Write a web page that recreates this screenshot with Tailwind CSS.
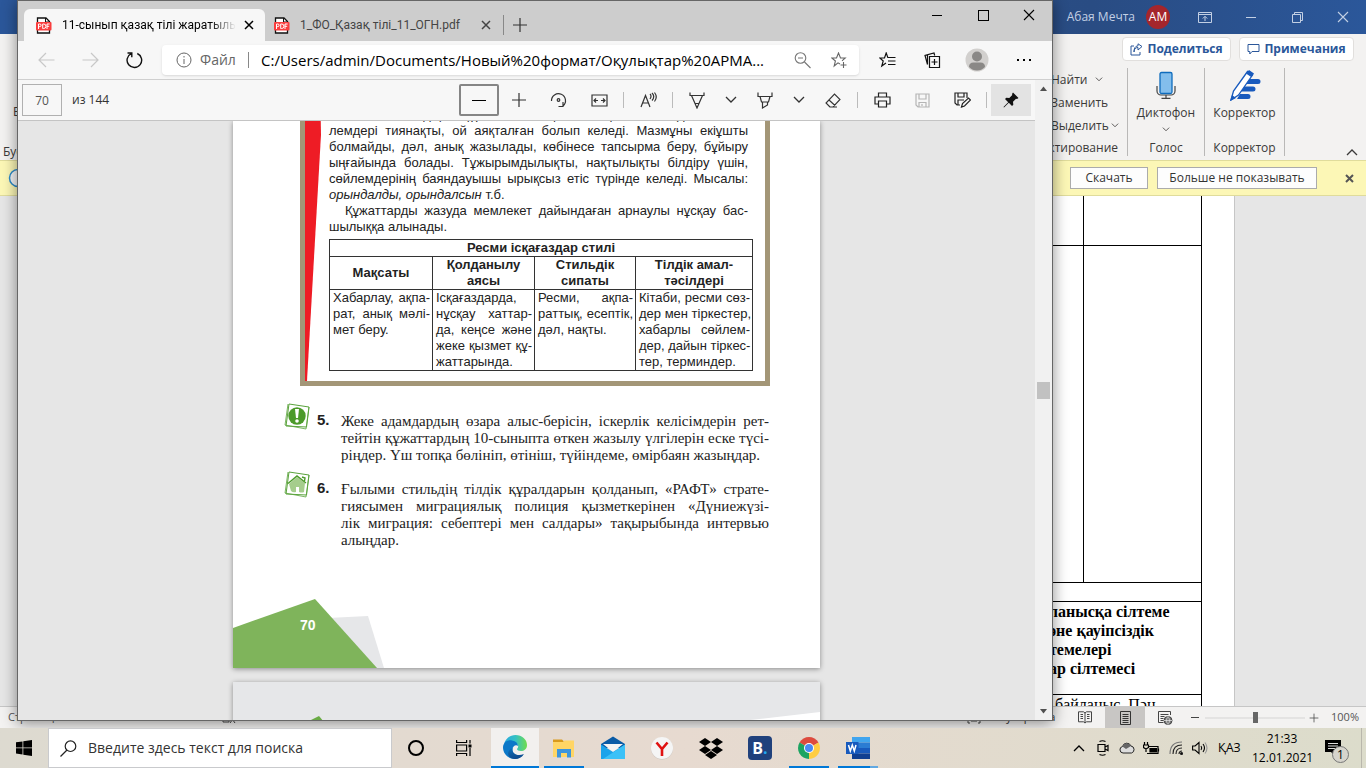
<!DOCTYPE html>
<html lang="kk">
<head>
<meta charset="utf-8">
<meta name="viewport" content="width=device-width, initial-scale=1">
<title>11-сынып қазақ тілі</title>
<script src="https://cdn.jsdelivr.net/npm/@tailwindcss/browser@4"></script>
</head>
<body class="h-screen overflow-hidden font-['Open_Sans','Noto_Sans',sans-serif] text-[#333]">
<svg class="hidden">
  <symbol id="pdf" viewBox="0 0 16 17"><path d="M1.500 5V1H10l3.500 3.500V16H1.500V13" fill="#fff" stroke="#111" stroke-width="1.300"/><path d="M9.500 1v4h4" fill="none" stroke="#111"/><rect x="0" y="5" width="15.500" height="8.500" rx="1" fill="#f93e3e"/><path d="M2.500 12V7h1.300a1.300 1.300 0 0 1 0 2.600H2.500M6.700 7v4.500h1a2 2 0 0 0 0-4.500zM11 12V7h2.600M11 9.300h2.200" fill="none" stroke="#fff" stroke-width="1"/></symbol>
  <symbol id="x" viewBox="0 0 10 10"><path d="M1 1l8 8M9 1l-8 8" stroke="currentColor" stroke-width="1.500"/></symbol>
  <symbol id="xthin" viewBox="0 0 12 12"><path d="M1 1l10 10M11 1L1 11" stroke="currentColor" stroke-width="1.100"/></symbol>
  <symbol id="plus" viewBox="0 0 16 16"><path d="M8 1v14M1 8h14" stroke="currentColor" stroke-width="1.200"/></symbol>
  <symbol id="chev" viewBox="0 0 12 8"><path d="M1 1l5 5 5-5" fill="none" stroke="currentColor" stroke-width="1.300"/></symbol>
</svg>
<div class="flex h-full flex-col">
 <div class="relative flex min-h-0 flex-1 flex-col overflow-hidden">

  <!-- Word window -->
  <header class="flex h-[34px] shrink-0 items-center justify-end bg-[#2b579a] bg-linear-to-r from-[#2b579a] via-[#294c83] via-80% to-[#2b579a] text-[#c3d0e4]">
    <span class="text-xs">Абая Мечта</span>
    <span class="ml-[11px] flex size-6 items-center justify-center rounded-full bg-[#a4262c] text-xs text-white">АМ</span>
    <div class="ml-3 flex h-full">
      <button aria-label="Лента" class="flex w-[46px] items-center justify-center"><svg width="14" height="11" viewBox="0 0 14 11" fill="none" stroke="currentColor"><path d="M.5.5h13v10H.5zM.5 2.500h13M7 9V4.500M4.800 6.500L7 4.300l2.200 2.200"/></svg></button>
      <button aria-label="Свернуть" class="flex w-[46px] items-center justify-center"><span class="h-px w-[10px] bg-current"></span></button>
      <button aria-label="Восстановить" class="flex w-[46px] items-center justify-center"><svg width="11" height="11" viewBox="0 0 11 11" fill="none" stroke="currentColor"><path d="M.5 2.500h8v8h-8zM2.500 2.500v-2h8v8h-2"/></svg></button>
      <button aria-label="Закрыть" class="flex w-[46px] items-center justify-center"><svg class="size-3"><use href="#xthin"/></svg></button>
    </div>
  </header>
  <div class="flex h-[30px] shrink-0 items-center justify-end gap-2 bg-[#f3f2f1] pr-3 text-xs font-bold text-[#2b579a]">
    <button class="flex h-6 w-[109px] items-center justify-center gap-1 rounded-sm border border-[#e1dfdd] bg-white"><svg width="13" height="13" viewBox="0 0 13 13" fill="none" stroke="currentColor"><path d="M4 3H1v9h9V9M4 9c0-3 1.500-4.500 4-4.500V7l4-3.500L8 .8v2C5 3 4 5.500 4 9z"/></svg>Поделиться</button>
    <button class="flex h-6 w-[115px] items-center justify-center gap-1 rounded-sm border border-[#e1dfdd] bg-white"><svg width="13" height="13" viewBox="0 0 13 13" fill="none" stroke="currentColor"><path d="M1 1.500h11v7H5L2.800 11V8.500H1z"/></svg>Примечания</button>
  </div>
  <section class="flex h-[96px] shrink-0 justify-between bg-[#f3f2f1] text-xs text-[#3b3a39]">
    <div class="flex flex-col justify-between pl-[3px]"><span class="pl-2.5 pt-10">В</span><span class="leading-4">Буфер</span></div>
    <div class="flex pt-1">
      <div class="relative flex h-[88px] w-[77px] flex-col border-r border-[#b9b8b7]">
        <div class="flex h-[23px] items-center gap-2"><span>Найти</span><svg class="h-[5px] w-2"><use href="#chev"/></svg></div>
        <span class="h-[23px] leading-[23px]">Заменить</span>
        <div class="flex h-[23px] items-center gap-0.5"><span>Выделить</span><svg class="h-[5px] w-2"><use href="#chev"/></svg></div>
        <span class="mt-auto self-end pr-[9px] leading-4">Редактирование</span>
      </div>
      <div class="flex h-[88px] w-[77px] flex-col items-center border-r border-[#b9b8b7]">
        <svg width="20" height="31" viewBox="0 0 20 31" fill="none"><path d="M1 18v5a4 4 0 0 0 4 4h10a4 4 0 0 0 4-4v-5M10 27v3M5.500 30.300h9" stroke="#444" stroke-width="1.200"/><rect x="4" y="4.500" width="12" height="21" rx="1.500" fill="#83beec" stroke="#0f6cbd" stroke-width="1.300"/></svg>
        <span class="mt-1.5 leading-4">Диктофон</span>
        <svg class="mt-1.5 h-[5px] w-2"><use href="#chev"/></svg>
        <span class="mt-auto leading-4">Голос</span>
      </div>
      <div class="flex h-[88px] w-[80px] flex-col items-center border-r border-[#b9b8b7]">
        <svg width="32" height="33" viewBox="0 0 32 33"><path d="M18 11h11a2.500 2.500 0 0 1 0 5H15zM15 18.500h9a2.500 2.500 0 0 1 0 5H12zM11 26h8a2.500 2.500 0 0 1 0 5H8z" fill="#185abd"/><path d="M2 32l2.500-9L18.500 3.500l5 3.500-14 20z" fill="#fff" stroke="#185abd" stroke-width="1.300"/><path d="M17 5.500l3-3.500 5 3.500-2.500 3.800zM1 33l2-6 4 3z" fill="#185abd"/></svg>
        <span class="mt-1 leading-4">Корректор</span>
        <span class="mt-auto leading-4">Корректор</span>
      </div>
      <div class="flex w-[81px] items-end justify-end pr-2 pb-1"><svg class="h-2 w-3 rotate-180"><use href="#chev"/></svg></div>
    </div>
  </section>
  <div class="flex h-9 shrink-0 items-center border-y border-[#e0dc9b] bg-[#fcf7b6] text-xs">
    <svg class="ml-2" width="20" height="20" viewBox="0 0 20 20"><circle cx="10" cy="10" r="8.500" fill="#f3f3f3" stroke="#2b8ac9" stroke-width="1.500"/></svg>
    <button class="ml-auto h-[22px] w-[78px] border border-[#ababab] bg-[#fdfdfd]">Скачать</button>
    <button class="ml-[9px] h-[22px] w-[160px] border border-[#ababab] bg-[#fdfdfd]">Больше не показывать</button>
    <button aria-label="Закрыть панель" class="mr-3 ml-7 flex size-[9px] text-[#555]"><svg class="size-2.5"><path d="M1 1l7 7M8 1L1 8" stroke="currentColor" stroke-width="2"/></svg></button>
  </div>
  <main class="min-h-0 flex-1 overflow-hidden bg-[#e6e6e6] pr-[131px] pl-10">
    <div class="h-full overflow-hidden border-r border-[#c6c6c6] bg-white pr-8 font-['Liberation_Serif',serif] text-base leading-[19px] text-black">
      <table class="ml-auto w-[300px] table-fixed border-collapse">
        <colgroup><col class="w-[181px]"><col></colgroup>
        <tbody>
        <tr class="h-[49px]"><td class="border-x border-b border-black"></td><td class="border-x border-b border-black"></td></tr>
        <tr class="h-[337px]"><td class="border border-black"></td><td class="border border-black"></td></tr>
        <tr class="h-[19px]"><td colspan="2" class="border border-black"></td></tr>
        <tr class="h-[93px]"><td colspan="2" class="border border-black pl-[146px] align-top font-bold">ланысқа сілтеме<br>әне қауіпсіздік<br>темелері<br>ар сілтемесі</td></tr>
        <tr><td colspan="2" class="border border-black pl-[152px]">байланыс. Пән</td></tr>
        </tbody>
      </table>
    </div>
  </main>
  <footer class="flex h-[22px] shrink-0 items-center border-t border-[#c6c6c6] bg-[#f3f2f1] text-[11px] text-[#555]">
    <span class="pl-2">Страница 5 из 8</span><span class="pl-6">Число слов: 727</span>
    <svg class="ml-5" width="14" height="12" viewBox="0 0 14 12" fill="none" stroke="#444"><path d="M7 10H1V1h6v9M8 4l5 7M13 4l-5 7"/></svg>
    <span class="pl-4">казахский</span>
    <svg class="ml-auto" width="14" height="12" viewBox="0 0 14 12" fill="none" stroke="#444"><path d="M3 1H1v10h2M11 1h2v10h-2M4 3h6v6H4z"/></svg>
    <span class="w-[84px] pl-1 text-[#333]">Фокусировка</span>
    <div class="flex h-full">
      <button aria-label="Режим чтения" class="flex w-10 items-center justify-center"><svg width="14" height="13" viewBox="0 0 14 13" fill="none" stroke="#444"><path d="M7 2L5.500.8H.5v10h5L7 12l1.500-1.200h5V.8h-5zM7 2v10M2.500 3.500h2.500M2.500 5.500h2.500M2.500 7.500h2.500M9 3.500h2.500M9 5.500h2.500M9 7.500h2.500"/></svg></button>
      <button aria-label="Разметка страницы" class="flex w-10 items-center justify-center bg-[#c8c6c4]"><svg width="11" height="14" viewBox="0 0 11 14" fill="none" stroke="#333"><path d="M.5.5h10v13H.5zM2.500 3.500h6M2.500 5.500h6M2.500 7.500h6M2.500 9.500h6M2.500 11.500h6"/></svg></button>
      <button aria-label="Веб-документ" class="flex w-10 items-center justify-center"><svg width="15" height="14" viewBox="0 0 15 14" fill="none" stroke="#444"><path d="M5.500 11.500h-5V.5h12V4M2.500 3.500h8M2.500 5.500h4M2.500 7.500h3M2.500 9.500h3"/><circle cx="10" cy="9.500" r="4" fill="#777"/><path d="M6 9.500h8M10 5.500c-2 2.500-2 5.500 0 8 2-2.500 2-5.500 0-8" stroke="#eee" stroke-width=".7"/></svg></button>
    </div>
    <button aria-label="Уменьшить" class="ml-1.5 flex w-2"><span class="h-px w-full bg-[#444]"></span></button>
    <input type="range" aria-label="Масштаб" value="50" class="ml-1.5 h-3 w-[100px] appearance-none bg-linear-to-b from-transparent from-45% via-[#999] via-50% to-transparent to-55% [&::-webkit-slider-thumb]:h-[11px] [&::-webkit-slider-thumb]:w-[5px] [&::-webkit-slider-thumb]:appearance-none [&::-webkit-slider-thumb]:bg-[#666]">
    <button aria-label="Увеличить" class="ml-1 flex text-[#444]"><svg class="size-2.5"><use href="#plus"/></svg></button>
    <span class="mr-[7px] ml-3">100%</span>
  </footer>

  <!-- Edge window -->
  <div class="absolute top-0 right-[313px] bottom-[7px] left-[17px] flex flex-col border border-[#666] bg-[#f7f7f7] shadow-[0_2px_14px_rgba(0,0,0,0.45)]">
    <div class="flex h-10 shrink-0 items-end bg-[#cdcdcd] text-xs">
      <div class="ml-1.5 flex h-8 w-[241px] items-center rounded-t-md bg-[#f7f7f7] pl-3 text-black">
        <svg class="h-[17px] w-4 shrink-0"><use href="#pdf"/></svg>
        <span class="ml-2.5 w-[174px] overflow-hidden font-[Roboto,'Noto_Sans',sans-serif] whitespace-nowrap mask-r-from-85%">11-сынып қазақ тілі жаратылыстану</span>
        <button aria-label="Закрыть вкладку" class="ml-2"><svg class="size-2.5"><use href="#x"/></svg></button>
      </div>
      <div class="flex h-8 items-center pl-[9px] text-[#444]">
        <svg class="h-[17px] w-4 shrink-0"><use href="#pdf"/></svg>
        <span class="ml-2.5 w-[181px] font-[Roboto,'Noto_Sans',sans-serif] whitespace-nowrap">1_ФО_Қазақ тілі_11_ОГН.pdf</span>
        <button aria-label="Закрыть вкладку"><svg class="size-2.5"><use href="#x"/></svg></button>
        <span class="ml-3 h-5 w-px bg-[#888]"></span>
        <button aria-label="Новая вкладка" class="ml-2 text-[#333]"><svg class="size-4"><use href="#plus"/></svg></button>
      </div>
      <div class="ml-auto flex h-7 self-start text-black">
        <button aria-label="Свернуть окно" class="flex w-[46px] items-center justify-center"><span class="h-px w-2.5 bg-black"></span></button>
        <button aria-label="Развернуть окно" class="flex w-[46px] items-center justify-center"><span class="size-[11px] border border-black"></span></button>
        <button aria-label="Закрыть окно" class="flex w-[46px] items-center justify-center"><svg class="size-3"><use href="#xthin"/></svg></button>
      </div>
    </div>
    <div class="flex h-[39px] shrink-0 items-center border-b border-[#cfcfcf] text-[#222]">
      <button aria-label="Назад" class="flex w-11 justify-center pl-3 text-[#c8c8c8]"><svg width="17" height="16" viewBox="0 0 17 16" fill="none" stroke="currentColor" stroke-width="1.200"><path d="M16.500 8H1M8 1L1 8l7 7"/></svg></button>
      <button aria-label="Вперёд" class="flex w-11 justify-center pl-3 text-[#c8c8c8]"><svg width="17" height="16" viewBox="0 0 17 16" fill="none" stroke="currentColor" stroke-width="1.200"><path d="M.5 8H16M9 1l7 7-7 7"/></svg></button>
      <button aria-label="Обновить" class="flex w-11 justify-center pl-3"><svg width="17" height="18" viewBox="0 0 17 18" fill="none" stroke="#111" stroke-width="1.400"><path d="M11.300 2.500A7.300 7.300 0 1 1 5.200 2.600M1.500 2h4.300v4.300"/></svg></button>
      <div class="ml-3 flex h-[30px] min-w-0 flex-1 items-center rounded-sm bg-white pr-3 pl-3.5 text-[15px] shadow-sm">
        <svg width="16" height="16" viewBox="0 0 16 16" fill="none" stroke="#666"><circle cx="8" cy="8" r="7"/><path d="M8 7v5M8 4v1.500"/></svg>
        <span class="ml-2 w-[42px] text-sm text-[#666]">Файл</span>
        <span class="ml-1.5 h-4 w-px bg-[#888]"></span>
        <input aria-label="Адрес" class="ml-3 min-w-0 flex-1 bg-transparent text-[15px] text-black outline-none" value="C:/Users/admin/Documents/Новый%20формат/Оқулықтар%20АРМА...">
        <button aria-label="Масштаб страницы"><svg width="17" height="17" viewBox="0 0 17 17" fill="none" stroke="#777" stroke-width="1.100"><circle cx="6.500" cy="6" r="5.300"/><path d="M4 6h5M10.500 10l6 6"/></svg></button>
        <button aria-label="В избранное" class="ml-5"><svg width="16" height="17" viewBox="0 0 16 17" fill="none" stroke="#666" stroke-width="1.100"><path d="M9 12l-2-1.200L3.200 14l1.200-5L.8 6h4.700L7.500 1l2 5h4.700L11 8.800M12.500 10v6M9.500 13h6"/></svg></button>
      </div>
      <div class="flex h-full items-center">
        <button aria-label="Избранное" class="ml-5"><svg width="17" height="16" viewBox="0 0 17 16" fill="none" stroke="#111" stroke-width="1.200"><path d="M7 11L2.800 14l1.400-5L.8 6h4.700L7.200 1l1.600 4.500h7.700M9 9h7.500M9 12.500h7.500"/></svg></button>
        <button aria-label="Коллекции" class="ml-7"><svg width="17" height="17" viewBox="0 0 17 17" fill="none" stroke="#111" stroke-width="1.200"><path d="M5.500 4.500h10v11h-10zM10.500 7v6M7.500 10h6M3.500 12.500L1 3.500l9-2.500.7 2.500M3.500 12.500V2.800"/></svg></button>
        <button aria-label="Профиль" class="ml-6"><svg width="24" height="24" viewBox="0 0 24 24"><circle cx="12" cy="12" r="11.500" fill="#d2d0ce"/><circle cx="12" cy="8.500" r="5" fill="#8a8886"/><path d="M4 19q0-4.500 4.500-4.500h7Q20 14.500 20 19q-3.500 3.500-8 3.500T4 19" fill="#8a8886"/></svg></button>
        <button aria-label="Меню" class="mr-[21px] ml-7 flex gap-1"><i class="size-[2px] bg-black"></i><i class="size-[2px] bg-black"></i><i class="size-[2px] bg-black"></i></button>
      </div>
    </div>
    <div class="flex min-h-0 flex-1">
      <div class="flex min-w-0 flex-1 flex-col">
        <div class="flex h-[41px] shrink-0 items-center border-b border-[#c4c4c4] pr-1 pl-1 text-xs text-[#333]">
          <input aria-label="Номер страницы" value="70" class="h-8 w-10 border border-[#b0b0b0] text-center text-[#555]">
          <span class="ml-2.5">из 144</span>
          <div class="ml-auto flex h-8 items-center">
            <button aria-label="Отдалить" class="flex h-8 w-10 items-center justify-center rounded-xs border-2 border-[#858585]"><span class="h-px w-3.5 bg-black"></span></button>
            <button aria-label="Приблизить" class="flex w-10 justify-center"><svg class="size-4"><use href="#plus"/></svg></button>
            <button aria-label="Повернуть" class="flex w-10 justify-center"><svg width="18" height="18" viewBox="0 0 18 18" fill="none" stroke="currentColor" stroke-width="1.200"><path d="M1.500 10A7 7 0 1 1 13 15M13 11v4.500H8.500"/><circle cx="8.500" cy="9" r="1.300"/></svg></button>
            <button aria-label="По ширине" class="flex w-10 justify-center"><svg width="17" height="13" viewBox="0 0 17 13" fill="none" stroke="currentColor" stroke-width="1.200"><path d="M1 1h15v11H1zM3 6.500h4M10 6.500h4M5 4.500l-2 2 2 2M12 4.500l2 2-2 2"/></svg></button>
            <span class="mx-1 h-4 w-px bg-[#bbb]"></span>
            <button aria-label="Прочесть вслух" class="flex w-10 justify-center"><svg width="17" height="16" viewBox="0 0 17 16" fill="none" stroke="currentColor" stroke-width="1.200"><path d="M1 15L5.500 3.500 10 15M2.500 11h6M10 2q2 2 0 5M12 1q3.500 3.500 0 7.500M14.500.5q3.500 4.500 0 9"/></svg></button>
            <span class="mx-1 h-4 w-px bg-[#bbb]"></span>
            <button aria-label="Рисование" class="flex w-10 justify-center"><svg width="16" height="17" viewBox="0 0 16 17" fill="none" stroke="currentColor" stroke-width="1.200"><path d="M1 .5v3h14v-3M2.500 3.500L8 16l5.500-12.500M6 11.500h4M7.500 14.500L8 16l.5-1.500"/></svg></button>
            <button aria-label="Параметры пера" class="flex w-7 justify-center"><svg class="h-2 w-3"><use href="#chev"/></svg></button>
            <button aria-label="Выделение" class="flex w-10 justify-center"><svg width="16" height="17" viewBox="0 0 16 17" fill="none" stroke="currentColor" stroke-width="1.200"><path d="M1 .5v4h14v-4M3 4.500l1.500 5.500h7L13 4.500M5.500 10v6l5-3V10"/></svg></button>
            <button aria-label="Параметры выделения" class="flex w-7 justify-center"><svg class="h-2 w-3"><use href="#chev"/></svg></button>
            <button aria-label="Ластик" class="flex w-10 justify-center"><svg width="16" height="15" viewBox="0 0 16 15" fill="none" stroke="currentColor" stroke-width="1.100"><path d="M5 14L1 10l8.500-9L15 6.500 8 14zM4 7l6 5.500M8 14h4"/></svg></button>
            <span class="mx-1 h-4 w-px bg-[#bbb]"></span>
            <button aria-label="Печать" class="flex w-10 justify-center"><svg width="17" height="16" viewBox="0 0 17 16" fill="none" stroke="#222" stroke-width="1.200"><path d="M4.500 5V1h8v4M4.500 12H1V5h15v7h-3.500M4.500 9h8v6h-8z"/></svg></button>
            <button aria-label="Сохранить" disabled class="flex w-10 justify-center text-[#b5b5b5]"><svg width="15" height="15" viewBox="0 0 15 15" fill="none" stroke="currentColor" stroke-width="1.200"><path d="M1 1h13v13H3l-2-2zM4 1v5h7V1M4 14V9.500h7V14M7 11v2"/></svg></button>
            <button aria-label="Сохранить как" class="flex w-10 justify-center"><svg width="17" height="16" viewBox="0 0 17 16" fill="none" stroke="#222" stroke-width="1.200"><path d="M6 13H3l-2-2V1h12v5M4 1v4h6V1M4 13V8h6M7.500 15l1-3.500L14.500 6l2 2-6 6z"/></svg></button>
            <span class="mx-1 h-4 w-px bg-[#bbb]"></span>
            <button aria-label="Закрепить" class="flex h-8 w-10 items-center justify-center bg-[#e3e3e3]"><svg width="16" height="16" viewBox="0 0 16 16"><path d="M10 .5L15.500 6l-1.500 1-1-.3-3 3 .3 3-1.300 1.300L5.800 10.800 1 15.500.5 15l4.700-4.800L2 7l1.300-1.300 3 .3 3-3L9 2z" fill="#111"/></svg></button>
          </div>
        </div>
        <!-- PDF pages -->
        <div class="min-h-0 flex-1 overflow-hidden bg-[#e6e6e6]">
          <article class="relative mx-auto h-[547px] w-[587px] overflow-hidden bg-white text-[#222] shadow-[0_1px_5px_rgba(0,0,0,0.4)]">
            <section class="relative ml-[67px] w-[470px] border-x-[5px] border-b-[5px] border-[#a39677] pr-[12px] pb-2.5 pl-[24px] font-['Liberation_Sans',sans-serif] text-[13px] leading-4">
              <svg class="absolute top-0 left-0 h-full w-4" viewBox="0 0 16 260" preserveAspectRatio="none"><path d="M0 0h15.500l.5 26L2 260H0z" fill="#ee1c25"/></svg>
              <div class="-mt-3.5 w-[419px] [&>p]:whitespace-nowrap [&>p]:[text-align-last:justify]">
                <p>Ресми стильдің құрылымы қалыптасқан болады. Сөй-</p>
                <p>лемдері тиянақты, ой аяқталған болып келеді. Мазмұны екіұшты</p>
                <p>болмайды, дәл, анық жазылады, көбінесе тапсырма беру, бұйыру</p>
                <p>ыңғайында болады. Тұжырымдылықты, нақтылықты білдіру үшін,</p>
                <p>сөйлемдерінің баяндауышы ырықсыз етіс түрінде келеді. Мысалы:</p>
              </div>
              <p><i>орындалды, орындалсын</i> т.б.</p>
              <p class="w-[419px] whitespace-nowrap pl-4 [text-align-last:justify]">Құжаттарды жазуда мемлекет дайындаған арнаулы нұсқау бас-</p>
              <p>шылыққа алынады.</p>
              <table class="mt-1 w-[424px] table-fixed border-collapse text-[13px] [&_td]:border [&_td]:border-[#333] [&_td]:pr-0.5 [&_td]:pl-[3px] [&_td]:align-top [&_td>p]:whitespace-nowrap [&_th]:border [&_th]:border-[#333] [&_th]:p-0">
                <colgroup><col class="w-[103px]"><col class="w-[102px]"><col class="w-[101px]"><col></colgroup>
                <thead>
                <tr><th colspan="4">Ресми ісқағаздар стилі</th></tr>
                <tr><th>Мақсаты</th><th>Қолданылу<br>аясы</th><th>Стильдік<br>сипаты</th><th>Тілдік амал-<br>тәсілдері</th></tr>
                </thead>
                <tbody><tr>
                <td><p class="[text-align-last:justify]">Хабарлау, ақпа-</p><p class="[text-align-last:justify]">рат, анық мәлі-</p><p>мет беру.</p></td>
                <td><p>Ісқағаздарда,</p><p class="[text-align-last:justify]">нұсқау хаттар-</p><p class="[text-align-last:justify]">да, кеңсе және</p><p class="[text-align-last:justify]">жеке қызмет құ-</p><p>жаттарында.</p></td>
                <td><p class="[text-align-last:justify]">Ресми, ақпа-</p><p class="[text-align-last:justify]">раттық, есептік,</p><p>дәл, нақты.</p></td>
                <td><p class="[text-align-last:justify]">Кітаби, ресми сөз-</p><p class="[text-align-last:justify]">дер мен тіркестер,</p><p class="[text-align-last:justify]">хабарлы сөйлем-</p><p class="[text-align-last:justify]">дер, дайын тіркес-</p><p>тер, терминдер.</p></td>
                </tr></tbody>
              </table>
            </section>
            <ol class="mt-[17px] ml-[51px] flex flex-col gap-[7px] font-['Liberation_Serif',serif] text-[15px] leading-[17px]">
              <li class="flex">
                <svg class="shrink-0" width="27" height="27" viewBox="0 0 27 27" fill="none" stroke="#5aa33c"><path d="M5 1l20 3-2.500 20L2 23z"/><path d="M4 1L1 22l21 4 3-22" stroke-width=".8"/><circle cx="13" cy="13" r="8.700" fill="#4c9a2a" stroke="none"/><path d="M11 6h4l-1 9h-2z" fill="#fff" stroke="none"/><circle cx="13" cy="18" r="1.800" fill="#fff" stroke="none"/></svg>
                <b class="ml-1.5 w-6 pt-2 font-['Liberation_Sans',sans-serif]">5.</b>
                <div class="w-[428px] whitespace-nowrap pt-[10px]"><p class="[text-align-last:justify]">Жеке адамдардың өзара алыс-берісін, іскерлік келісімдерін рет-</p><p class="[text-align-last:justify]">тейтін құжаттардың 10-сыныпта өткен жазылу үлгілерін еске түсі-</p><p>ріңдер. Үш топқа бөлініп, өтініш, түйіндеме, өмірбаян жазыңдар.</p></div>
              </li>
              <li class="flex">
                <svg class="shrink-0" width="27" height="27" viewBox="0 0 27 27" fill="none" stroke="#5aa33c"><path d="M5 1l20 3-2.500 20L2 23z"/><path d="M4 1L1 22l21 4 3-22" stroke-width=".8"/><path d="M5 13l8-7 8 6-1 9q-2 1-5 0v-5h-3v5q-3 1-5-1z" fill="#a5cd8c" stroke="none"/><path d="M4 12.500L13 5l9 7M18 6l3 1-.5 3" stroke-width="1.400" stroke="#4c9a2a"/></svg>
                <b class="ml-1.5 w-6 pt-2 font-['Liberation_Sans',sans-serif]">6.</b>
                <div class="w-[428px] whitespace-nowrap pt-[10px]"><p class="[text-align-last:justify]">Ғылыми стильдің тілдік құралдарын қолданып, «РАФТ» страте-</p><p class="[text-align-last:justify]">гиясымен миграциялық полиция қызметкерінен «Дүниежүзі-</p><p class="[text-align-last:justify]">лік миграция: себептері мен салдары» тақырыбында интервью</p><p>алыңдар.</p></div>
              </li>
            </ol>
            <svg class="absolute bottom-0 left-0" width="152" height="70" viewBox="0 0 152 70"><path d="M95 20l40-2 16 52H95z" fill="#e6e7e9"/><path d="M0 30L82 1l62 69H0z" fill="#7fb45b"/></svg>
            <span class="absolute bottom-[34px] left-[67px] font-['Liberation_Sans',sans-serif] text-sm leading-[18px] font-bold text-white">70</span>
          </article>
          <article class="relative mx-auto mt-3.5 h-[547px] w-[587px] bg-[#e6e7e9] shadow-[0_1px_5px_rgba(0,0,0,0.4)]">
            <svg class="w-full" viewBox="0 0 587 40"><path d="M500 40l87-10v10z" fill="#fff"/><path d="M74 40l12-6 5 6z" fill="#6aab45"/></svg>
          </article>
        </div>
      </div>
      <div class="flex w-[17px] flex-col items-center bg-[#f1f1f1] pt-1.5">
        <svg width="7" height="5" viewBox="0 0 7 5"><path d="M0 5l3.500-4.500L7 5z" fill="#505050"/></svg>
        <span class="mt-[291px] h-[17px] w-[13px] bg-[#c1c1c1]"></span>
        <svg class="mt-auto mb-1.5" width="7" height="5" viewBox="0 0 7 5"><path d="M0 0l3.500 4.500L7 0z" fill="#505050"/></svg>
      </div>
    </div>
  </div>
 </div>

 <!-- Taskbar -->
 <nav class="flex h-10 shrink-0 items-stretch bg-linear-to-r from-[#dddad0] via-[#e7dad0] to-[#dcdccb] text-black">
  <button aria-label="Пуск" class="flex w-12 items-center justify-center"><svg width="16" height="16" viewBox="0 0 16 16"><path d="M0 2.300L6.500 1.400v6H0zM7.300 1.300L16 0v7.400H7.300zM0 8.300h6.500v6.200L0 13.600zM7.300 8.300H16V16l-8.700-1.300z"/></svg></button>
  <label class="flex w-[344px] items-center border border-[#c9cacd] bg-white pl-[11px]"><svg width="17" height="17" viewBox="0 0 17 17" fill="none" stroke="#222" stroke-width="1.200"><circle cx="10.500" cy="6.200" r="5.300"/><path d="M7 10l-6.500 6.500"/></svg>
    <input aria-label="Поиск" placeholder="Введите здесь текст для поиска" class="ml-[11px] min-w-0 flex-1 text-sm outline-none placeholder:text-[#333]"></label>
  <button aria-label="Кортана" class="flex w-12 items-center justify-center"><span class="size-4 rounded-full border-2 border-black"></span></button>
  <button aria-label="Представление задач" class="flex w-12 items-center justify-center"><svg width="16" height="16" viewBox="0 0 16 16" fill="none" stroke="#000" stroke-width="1.200"><path d="M.6 0v2.500h10V0M.6 16v-2.500h10V16M.6 5h10v6H.6zM14 0v3.500M14 8v8"/><path d="M12.500 4.500h3v3h-3z" fill="#000" stroke="none"/></svg></button>
  <div class="ml-[3px] flex gap-px">
   <button aria-label="Edge" class="flex w-12 items-center justify-center border-b-2 border-[#0078d7] bg-[#f2f0ee]"><svg width="24" height="24" viewBox="0 0 24 24"><defs><linearGradient id="e1" x1="0" x2="1"><stop offset="0" stop-color="#2aa9e0"/><stop offset=".5" stop-color="#35c1c4"/><stop offset="1" stop-color="#6fdc4c"/></linearGradient><linearGradient id="e2" x2=".3" y2="1"><stop stop-color="#0c72bd"/><stop offset="1" stop-color="#0f4a8c"/></linearGradient></defs><path d="M1 9C3 3 7.500 0 12.500 0 19 0 24 4.500 24 10c0 4-3 6-6 6-2.500 0-4-1-4-2 1-1 1.500-2 1-3.500C14 6.500 6 4.500 1 9z" fill="url(#e1)"/><path d="M0 12c.5-5 5-7.500 9-6.500 4 .8 6 3 6 5.500-2-2-6 0-5.500 4.500C10 20 15 22 20 20c-5 6-14 4.500-17.500-.5C.5 17 0 14.500 0 12z" fill="#0c78c8"/><path d="M9.500 13c-1 5 4 9 11.500 6-3 5-9 6-13 4-4-2-4-8 1.500-10z" fill="url(#e2)"/></svg></button>
   <button aria-label="Проводник" class="flex w-12 items-center justify-center"><span class="flex h-full w-10 items-center justify-center border-b-2 border-[#0078d7] pt-0.5"><svg width="22" height="20" viewBox="0 0 22 20"><path d="M0 1.500h9l2 2V6H0z" fill="#d99a1c"/><path d="M0 4h10l1.500-1.500H21V19H0z" fill="#ffd565"/><path d="M4 11h14v8.500h-4V15H8v4.500H4z" fill="#3d95dc"/></svg></span></button>
   <button aria-label="Почта" class="flex w-12 items-center justify-center"><svg width="24" height="24" viewBox="0 0 24 24"><path d="M0 8L12 .5 24 8v4H0z" fill="#0a5ba6"/><path d="M2 8h20l-10 8z" fill="#f4f4f4"/><path d="M0 8.500L12 16 24 8.500V23H0z" fill="#1aa3ea"/><path d="M24 8.500L2 23h22z" fill="#3bc1f7"/></svg></button>
   <button aria-label="Яндекс" class="flex w-12 items-center justify-center"><svg width="24" height="24" viewBox="0 0 24 24"><circle cx="12" cy="12.500" r="11" fill="#c9c2bc"/><circle cx="12" cy="12" r="11" fill="#f5f5f5"/><path d="M6.500 6.500l5.500 6.500 5.500-6.500M12 12.500V20" fill="none" stroke="#e01212" stroke-width="2.600"/></svg></button>
   <button aria-label="Dropbox" class="flex w-12 items-center justify-center"><svg width="24" height="21" viewBox="0 0 24 21"><path d="M6 0l6 4-6 4-6-4zM18 0l6 4-6 4-6-4zM6 8l6 4-6 4-6-4zM18 8l6 4-6 4-6-4zM12 13l6 4-6 4-6-4z"/></svg></button>
   <button aria-label="Booking" class="flex w-12 items-center justify-center"><span class="flex size-6 items-center justify-center rounded-sm bg-[#20417c] text-base font-bold text-white">B<span class="text-[#22a7f0]">.</span></span></button>
   <button aria-label="Chrome" class="flex w-12 items-center justify-center"><span class="flex h-full w-10 items-center justify-center border-b-2 border-[#0078d7] pt-0.5"><svg width="22" height="22" viewBox="0 0 22 22"><path d="M11 11L1.500 5.500A11 11 0 0 1 20.500 5.500z" fill="#dd4b3e"/><path d="M11 11l9.500-5.500A11 11 0 0 1 11 22z" fill="#ffcd41"/><path d="M11 11v11A11 11 0 0 1 1.500 5.500z" fill="#1da462"/><circle cx="11" cy="11" r="5" fill="#fff"/><circle cx="11" cy="11" r="4" fill="#4a8af4"/></svg></span></button>
   <button aria-label="Word" class="flex w-12 flex-col items-center"><span class="flex flex-1 items-center pt-0.5"><svg width="24" height="22" viewBox="0 0 24 22"><path d="M6 0h18v5.500H6z" fill="#41a5ee"/><path d="M6 5.500h18V11H6z" fill="#2b7cd3"/><path d="M6 11h18v5.500H6z" fill="#185abd"/><path d="M6 16.500h18V22H6z" fill="#103f91"/><path d="M0 5h12.500v12H0z" fill="#185abd"/><path d="M2.500 8l1.800 6 2-6 2 6L10 8" fill="none" stroke="#fff" stroke-width="1.500"/></svg></span><span class="flex h-0.5 w-10"><i class="w-8 bg-[#0078d7]"></i><i class="w-2 bg-[#62a9e2]"></i></span></button>
  </div>
  <div class="ml-auto flex items-center">
    <button aria-label="Скрытые значки" class="flex w-6 justify-center"><svg class="h-2 w-3 rotate-180"><use href="#chev"/></svg></button>
    <span class="flex w-6 justify-center"><svg width="12" height="16" viewBox="0 0 12 16" fill="none" stroke="#000" stroke-width="1.200"><path d="M1 4.500h7v7H1zM8 7l3-1.500v5L8 9M2.500 1.500q3-1.500 6 0M2.500 14.500q3 1.500 6 0"/></svg></span>
    <span class="flex w-6 justify-center"><svg width="16" height="12" viewBox="0 0 16 12"><path d="M4 11a3.300 3.300 0 0 1-.5-6.500A4.500 4.500 0 0 1 12 4a3.600 3.600 0 0 1 .5 7z" fill="#ddd" stroke="#222"/><path d="M3.500 4.500A4.500 4.500 0 0 1 12 4l-5 3z" fill="#666"/></svg></span>
    <span class="flex w-[25px] justify-center"><svg width="17" height="13" viewBox="0 0 17 13" fill="none" stroke="#000" stroke-width="1.200"><path d="M5 4.500h10v7H4M15.500 6.500v3M1.500 0v3M4.500 0v3M.5 3h5v2.500L3 7 .5 5.500zM3 7v3"/><path d="M7 6.500h6.500V10H7z" fill="#000"/></svg></span>
    <span class="flex w-6 justify-center"><svg width="14" height="14" viewBox="0 0 14 14" fill="none" stroke="#222" stroke-width="1.100"><path d="M1 13Q1 1 13 1" stroke="#777"/><path d="M4 13Q4 4 13 4M7 13q0-6 6-6M10 13q0-3 3-3"/><circle cx="12.500" cy="12.500" r="1" fill="#000"/></svg></span>
    <span class="flex w-6 justify-center"><svg width="16" height="14" viewBox="0 0 16 14" fill="none" stroke="#000" stroke-width="1.100"><path d="M.6 5h2.500L7 1.500v11L3.100 9H.6zM9 5q1.500 2 0 4M11 3q3 4 0 8"/><path d="M13 1.500q4 5.500 0 11" stroke="#999"/></svg></span>
    <span class="w-10 pl-1.5 text-xs">ҚАЗ</span>
    <div class="w-[60px] text-center text-xs leading-[19px]">21:33<br>12.01.2021</div>
    <button aria-label="Уведомления" class="relative ml-2.5 flex w-[39px] pl-[3px]"><svg width="16" height="16" viewBox="0 0 16 16"><path d="M0 0h16v12H9v3l-3-3H0z"/><path d="M3 3.500h10M3 6h10M3 8.500h7" stroke="#ddd"/></svg><span class="absolute top-1.5 left-2.5 flex size-[17px] items-center justify-center rounded-full border border-[#777] bg-[#d6d4cc] text-xs">1</span></button>
    <span class="mr-1 h-full w-px bg-[#b9b7ac]"></span>
  </div>
 </nav>
</div>
</body>
</html>
